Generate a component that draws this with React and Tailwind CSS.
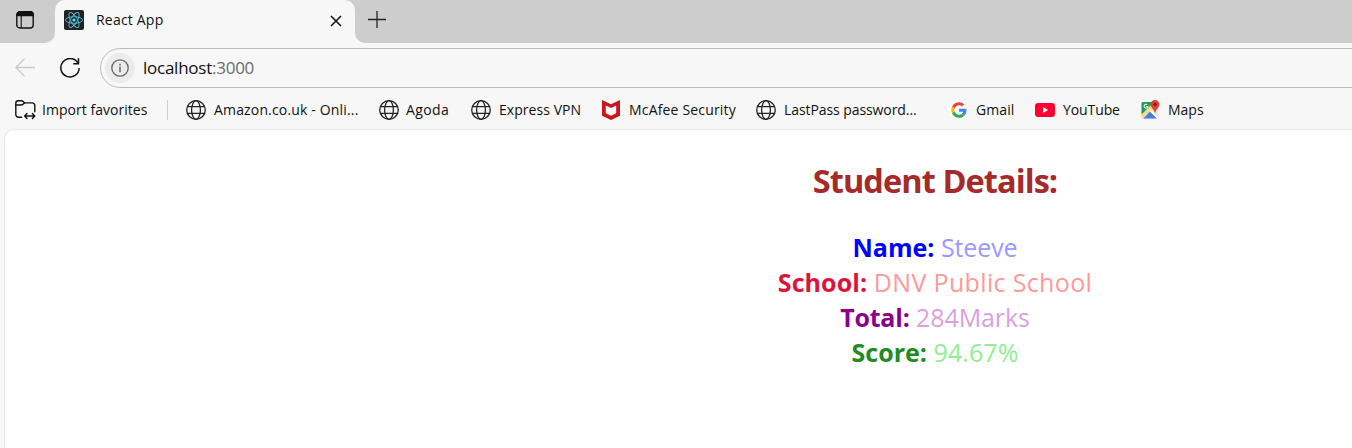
import React from "react";

function WorkspaceIcon() {
  return (
    <svg width="18" height="18" viewBox="0 0 18 18" fill="none" stroke="#111" strokeWidth="1.4">
      <rect x="0.8" y="0.8" width="16.4" height="16.2" rx="3" />
      <path d="M1 4.6V3.8a3 3 0 0 1 3-3h10a3 3 0 0 1 3 3v.8z" fill="#111" />
      <path d="M5.2 5v12" strokeWidth="1.1" />
    </svg>
  );
}

function ReactIcon() {
  return (
    <svg width="20" height="20" viewBox="0 0 20 20" className="shrink-0">
      <rect width="20" height="20" rx="2" fill="#222" />
      <g fill="none" stroke="#53c1de" strokeWidth="0.9">
        <ellipse cx="10" cy="10" rx="8.5" ry="3.3" />
        <ellipse cx="10" cy="10" rx="8.5" ry="3.3" transform="rotate(60 10 10)" />
        <ellipse cx="10" cy="10" rx="8.5" ry="3.3" transform="rotate(120 10 10)" />
      </g>
      <circle cx="10" cy="10" r="1.6" fill="#61dafb" />
    </svg>
  );
}

function Globe() {
  return (
    <svg width="20" height="20" viewBox="0 0 20 20" fill="none" stroke="#222" strokeWidth="1.3" className="shrink-0">
      <circle cx="10" cy="10" r="9.3" />
      <ellipse cx="10" cy="10" rx="4.4" ry="9.3" />
      <path d="M1.5 6.7h17M1.5 13.3h17" />
    </svg>
  );
}

function FolderIcon() {
  return (
    <svg width="21" height="20" viewBox="0 0 21 20" fill="none" stroke="#111" strokeWidth="1.4" strokeLinecap="round" strokeLinejoin="round" className="shrink-0">
      <path d="M6.600 17.200H3.400A2.600 2.600 0 0 1 .8 14.600V3.300A2.500 2.500 0 0 1 3.300.8h3.200c.7 0 1.200.3 1.700.8L9.600 2.900h7.600a2.600 2.600 0 0 1 2.600 2.600v6.200" />
      <path d="M.8 5h5.400c.8 0 1.300-.2 1.800-.7l1.600-1.400" />
      <path d="M9.800 16h9.800M12 13.600 9.600 16l2.400 2.400M17.400 13.600l2.400 2.400-2.400 2.400" />
    </svg>
  );
}

function McAfeeIcon() {
  return (
    <svg width="18" height="20" viewBox="0 0 18 20" className="shrink-0">
      <path d="M0 0 9 4.300 18 0v15.700L9 20 0 15.700z" fill="#c8161d" />
      <path d="M3.800 5.500 9 8l5.200-2.500v7.800L9 15.800l-5.200-2.500z" fill="#f7f7f7" />
    </svg>
  );
}

function GoogleIcon() {
  return (
    <svg width="20" height="20" viewBox="0 0 20 20" className="shrink-0">
      <circle cx="10" cy="10" r="10" fill="#fff" />
      <g transform="translate(2.200 2.200) scale(.325)">
        <path fill="#ea4335" d="M24 9.500c3.540 0 6.710 1.220 9.210 3.600l6.850-6.850C35.900 2.380 30.470 0 24 0 14.620 0 6.510 5.380 2.560 13.220l7.980 6.190C12.430 13.720 17.740 9.500 24 9.500z" />
        <path fill="#4285f4" d="M46.980 24.550c0-1.570-.15-3.090-.38-4.550H24v9.020h12.940c-.58 2.960-2.260 5.480-4.780 7.180l7.730 6c4.510-4.180 7.090-10.360 7.090-17.650z" />
        <path fill="#fbbc05" d="M10.530 28.590c-.48-1.450-.76-2.990-.76-4.590s.27-3.140.76-4.590l-7.980-6.190C.92 16.460 0 20.120 0 24c0 3.880.92 7.540 2.560 10.780l7.970-6.190z" />
        <path fill="#34a853" d="M24 48c6.480 0 11.930-2.130 15.890-5.810l-7.730-6c-2.150 1.450-4.920 2.300-8.160 2.300-6.260 0-11.570-4.220-13.470-9.910l-7.980 6.190C6.510 42.620 14.620 48 24 48z" />
      </g>
    </svg>
  );
}

function YouTubeIcon() {
  return (
    <svg width="20" height="20" viewBox="0 0 20 20" className="shrink-0">
      <rect y="3" width="20" height="14" rx="3.200" fill="#ff0033" />
      <path d="M8 7.100 13.100 10 8 12.900z" fill="#fff" />
    </svg>
  );
}

function MapsIcon() {
  return (
    <svg width="19" height="20" viewBox="0 0 19 20" className="shrink-0">
      <rect x="0.500" y="2" width="17" height="16.500" rx="1.500" fill="#e4e4e4" />
      <path d="M2 2H13L.5 15V3.500A1.500 1.500 0 0 1 2 2z" fill="#1f9d58" />
      <path d="M.5 14.500 11.500 4l2.500 3.500L3 18.500H2A1.500 1.500 0 0 1 .5 17z" fill="#fbd98a" />
      <path d="M2.500 18.500 9 11.500l7 7z" fill="#3f7de8" />
      <path d="m9 11.500 1.500-1.500 6.500 7v1.500h-1z" fill="#fff" />
      <path d="M6.300 4.800a1.900 1.900 0 1 0 .6 1.700H5.200" fill="none" stroke="#e8f5ec" strokeWidth="1.100" />
      <path d="M14 0a4.400 4.400 0 0 1 4.400 4.400c0 3.200-3.600 4.600-4.400 9.200-.8-4.600-4.400-6-4.400-9.200A4.400 4.400 0 0 1 14 0z" fill="#dc4437" />
      <circle cx="14" cy="4.400" r="1.600" fill="#7b231d" />
    </svg>
  );
}

const bookmarks = [
  { label: "Amazon.co.uk - Onli...", icon: <Globe />, box: "w-[193px]", text: "tracking-[0.16px]" },
  { label: "Agoda", icon: <Globe />, box: "w-[92px]", text: "-ml-px tracking-[0.4px]" },
  { label: "Express VPN", icon: <Globe />, box: "w-[131px]", text: "tracking-[0.05px]" },
  { label: "McAfee Security", icon: <McAfeeIcon />, box: "w-[154px]", text: "tracking-[0.17px] pl-px" },
  { label: "LastPass password...", icon: <Globe />, box: "w-[193px]", text: "tracking-[-0.08px]" },
  { label: "Gmail", icon: <GoogleIcon />, box: "w-[86px]", text: "-ml-px tracking-[0.1px]" },
  { label: "YouTube", icon: <YouTubeIcon />, box: "w-[106px]", text: "tracking-[-0.1px]" },
  { label: "Maps", icon: <MapsIcon />, box: "w-[80px]", text: "tracking-[0px]" },
];

const details = [
  { label: "Name:", value: "Steeve", l: "text-[#0000ff] tracking-[0px]", v: "text-[#9999ff] tracking-[-0.1px]" },
  { label: "School:", value: "DNV Public School", l: "text-[#dc143c] tracking-[0.1px]", v: "text-[#ff9999] tracking-[0.35px]" },
  { label: "Total:", value: "284Marks", l: "text-[#8b008b] tracking-[-0.2px]", v: "text-[#dda0dd] tracking-[-0.1px]" },
  { label: "Score:", value: "94.67%", l: "text-[#228b22] tracking-[0px]", v: "text-[#90ee90] tracking-[0.1px]" },
];

function TabStrip() {
  return (
    <div className="flex h-[43px] bg-[#f7f7f7]">
      <div className="flex h-[42.500px] w-[55px] rounded-br-[10px] bg-[#cdcdcd] pt-[11px] pl-4">
        <WorkspaceIcon />
      </div>
      <div className="h-[43px] w-[300px] [background:linear-gradient(#cdcdcd_50%,#f7f7f7_50%)]">
        <div className="flex h-[43px] items-start rounded-t-[10px] bg-[#f7f7f7] pt-[10px] pl-[9px]">
          <ReactIcon />
          <span className="ml-3 w-[234px] text-[14px] leading-5 tracking-[0.2px]">React App</span>
          <svg width="12" height="12" viewBox="0 0 12 12" className="mt-[5px] shrink-0" stroke="#111" strokeWidth="1.500">
            <path d="m1 1 10 10M11 1 1 11" />
          </svg>
        </div>
      </div>
      <div className="flex h-[42.500px] flex-1 rounded-bl-[10px] bg-[#cdcdcd] pt-[11px] pl-[13px]">
        <svg width="18" height="18" viewBox="0 0 18 18" stroke="#222" strokeWidth="1.300">
          <path d="M0 8.500h18M9 0v17" />
        </svg>
      </div>
    </div>
  );
}

function AddressBar() {
  return (
    <div className="flex h-[46px] pt-[5px] pl-[15px]">
      <svg width="20" height="20" viewBox="0 0 20 20" className="mt-[9px] shrink-0" fill="none" stroke="#c8c8c8" strokeWidth="1.300">
        <path d="M20 10.500H1M9.500 1.700.8 10.500l8.700 8.700" />
      </svg>
      <svg width="20" height="20" viewBox="0 0 20 20" className="mt-[10px] ml-[25px] shrink-0" fill="none" stroke="#111" strokeWidth="1.500">
        <path d="M18 5.200A9.200 9.200 0 1 0 19.200 10M18.500.3v5.400h-5.200" />
      </svg>
      <div className="ml-5 flex h-10 w-[1300px] shrink-0 items-center rounded-full border-[1.500px] border-[#bcbcbc] bg-[#f7f7f7] pl-1">
        <div className="flex size-[30px] items-center justify-center rounded-full bg-[#ebebeb]">
          <svg width="18" height="18" viewBox="0 0 18 18" fill="none" stroke="#666" strokeWidth="1.300">
            <circle cx="9" cy="9" r="8.200" />
            <path d="M9 7.800v5.400M9 4.800v1.600" strokeWidth="1.500" />
          </svg>
        </div>
        <span className="ml-2 text-[17px] leading-5 tracking-[-0.25px] text-[#111]">
          localhost<span className="text-[#6b6b6b]">:3000</span>
        </span>
      </div>
    </div>
  );
}

function FavoritesBar() {
  return (
    <div className="flex h-10 items-center pt-px pl-[15px] text-[14px] whitespace-nowrap">
      <div className="flex w-[152px] shrink-0 items-center">
        <FolderIcon />
        <span className="ml-[6px] leading-5 tracking-[0.03px]">Import favorites</span>
      </div>
      <div className="mr-[18px] h-5 w-px bg-[#cfcfcf]" />
      {bookmarks.map((b) => (
        <div key={b.label} className={`flex shrink-0 items-center gap-2 ${b.box}`}>
          {b.icon}
          <span className={`leading-5 ${b.text}`}>{b.label}</span>
        </div>
      ))}
    </div>
  );
}

export default function App() {
  return (
    <div className="h-[448px] w-[1352px] overflow-hidden bg-[#f7f7f7] font-['Open_Sans',sans-serif] text-[#111]">
      <TabStrip />
      <AddressBar />
      <FavoritesBar />
      <main className="ml-1 h-[330px] w-[1861px] rounded-tl-[10px] border-t border-l border-[#e8e8e8] bg-white pt-[27px] text-center">
        <h1 className="text-[32.500px] leading-[48px] font-bold tracking-[-0.93px] text-[#a52a2a]">Student Details:</h1>
        <div className="mt-[25px]">
          {details.map((d) => (
            <p key={d.label} className="text-[25px] leading-[35px] whitespace-nowrap">
              <b className={d.l}>{d.label}</b> <span className={d.v}>{d.value}</span>
            </p>
          ))}
        </div>
      </main>
    </div>
  );
}
